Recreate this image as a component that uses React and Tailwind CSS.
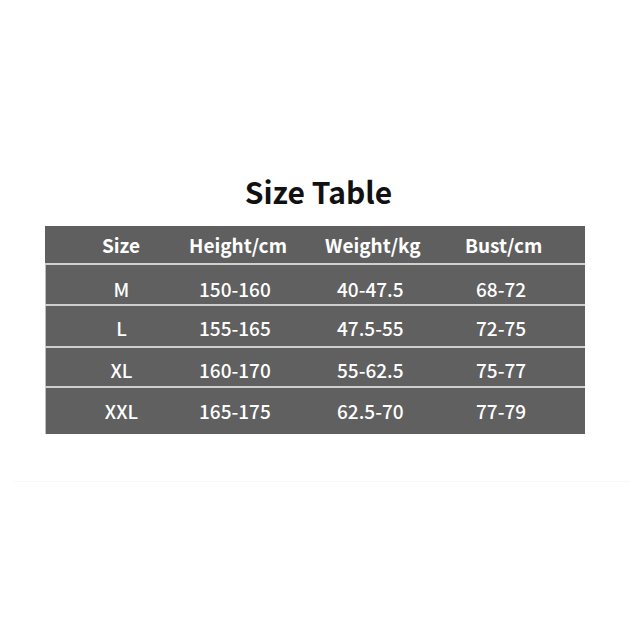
import React from "react";

const rows = [
  { size: "M", height: "150-160", weight: "40-47.5", bust: "68-72", h: "h-[39px]", pt: "pt-[9px]" },
  { size: "L", height: "155-165", weight: "47.5-55", bust: "72-75", h: "h-[40px]", pt: "pt-[5px]" },
  { size: "XL", height: "160-170", weight: "55-62.5", bust: "75-77", h: "h-[38px]", pt: "pt-[7px]" },
  { size: "XXL", height: "165-175", weight: "62.5-70", bust: "77-79", h: "h-[46px]", pt: "pt-[1px]" },
];

const font = { fontFamily: '"Noto Sans CJK SC", "Noto Sans", sans-serif' };

export default function App() {
  return (
    <div className="w-[637px] h-[637px] bg-white overflow-hidden" style={font}>
      {/* Title */}
      <div className="pt-[171px] h-[226px]">
        <h1 className="text-center text-[30px] leading-[40px] font-bold text-[#111111]">
          Size Table
        </h1>
      </div>

      {/* Table */}
      <div className="ml-[45px] w-[540px] text-white">
        <div className="grid grid-cols-[144px_136px_140px_120px] items-center h-[37px] pt-[1px] bg-[#5f5f5f] text-[19px] font-bold">
          <div className="pl-[8px] text-center">Size</div>
          <div>Height/cm</div>
          <div>Weight/kg</div>
          <div>Bust/cm</div>
        </div>
        {rows.map((r) => (
          <div key={r.size} className="border-t-[2px] border-[#cfcfcf]">
            <div
              className={`grid grid-cols-[144px_136px_140px_120px] items-center bg-[#606060] border-l border-[#bdbdbd] text-[19px] font-medium ${r.h} ${r.pt}`}
            >
              <div className="pl-[7px] text-center">{r.size}</div>
              <div className="pl-[9px]">{r.height}</div>
              <div className="pl-[11px]">{r.weight}</div>
              <div className="pl-[10px]">{r.bust}</div>
            </div>
          </div>
        ))}
      </div>

      {/* faint divider below */}
      <div className="mt-[47px] ml-[13px] w-[617px] h-px bg-[#f8f8f8]" />
    </div>
  );
}
